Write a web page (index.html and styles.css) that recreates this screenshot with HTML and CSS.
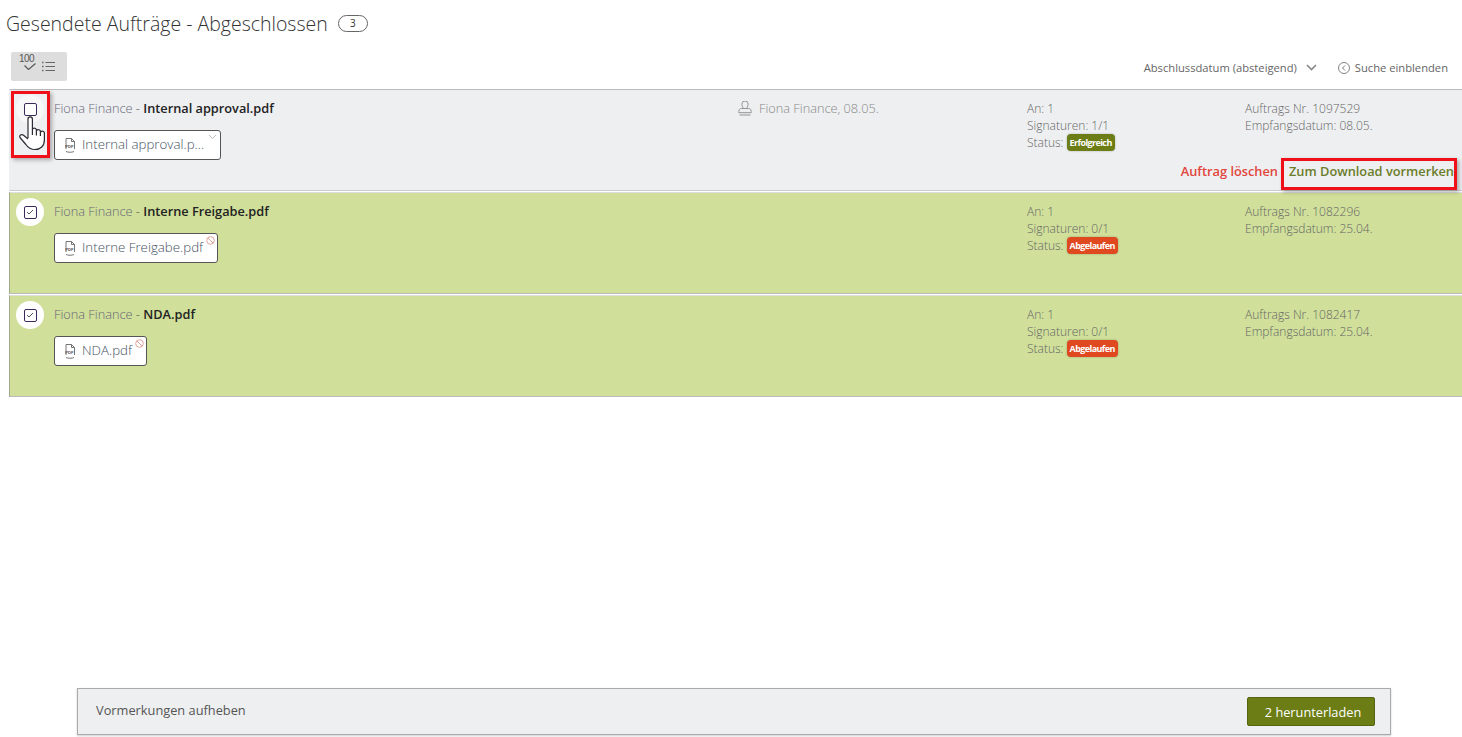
FILE: index.html
```html
<!DOCTYPE html>
<html lang="de">
<head>
    <meta charset="UTF-8">
    <title>Gesendete Aufträge - Abgeschlossen</title>
    <link rel="stylesheet" href="styles.css">
</head>
<body>
    <!-- Title -->
    <div class="page-title">
        <h1>Gesendete Aufträge - Abgeschlossen</h1>
        <span class="count-pill">3</span>
    </div>

    <!-- Toolbar -->
    <div class="toolbar">
        <button class="select-btn">
            <span class="select-100">100</span>
            <svg class="select-check" width="12" height="7" viewBox="0 0 12 7"><path d="M.5 2.500L4.500 6.500 11.500.5" fill="none" stroke="#555" stroke-width="1.100"/></svg>
            <svg class="select-list" width="13" height="11" viewBox="0 0 13 11"><path d="M3.500 1.500H13M3.500 5.500H13M3.500 9.500H13" stroke="#666" stroke-width="1"/><path d="M0 1.500h1.500M0 5.500h1.500M0 9.500h1.500" stroke="#666" stroke-width="1.400"/></svg>
        </button>
        <div class="toolbar-right">
            <span>Abschlussdatum (absteigend)</span>
            <svg class="sort-chevron" width="11" height="7" viewBox="0 0 11 7"><path d="M1 1l4.500 4.500L10 1" fill="none" stroke="#888" stroke-width="1.600"/></svg>
            <svg class="search-icon" width="12" height="12" viewBox="0 0 12 12"><circle cx="6" cy="6" r="5.500" fill="none" stroke="#666" stroke-width="0.800"/><path d="M7 3.500L4.500 6 7 8.500" fill="none" stroke="#666" stroke-width="0.900"/></svg>
            <span>Suche einblenden</span>
        </div>
    </div>

    <!-- Orders -->
    <div class="order-list">
        <div class="order order-open">
            <div class="order-main">
                <div class="check-cell">
                    <span class="check-circle"><span class="check-box"></span></span>
                </div>
                <div>
                    <div class="order-name"><span class="sender">Fiona Finance</span> - <b>Internal approval.pdf</b></div>
                    <div class="doc-chip doc-chip-long">
                        <svg class="pdf-icon" width="12" height="16" viewBox="0 0 12 16"><path d="M2 12V1.500h5.500L10.500 4.500V12M7.500 1.500v3h3M2 14.500c2 1 6 1 8 0" fill="none" stroke="#666" stroke-width="0.900"/><text x="1.200" y="11" class="pdf-label">PDF</text></svg>
                        <span class="doc-name">Internal approval.p...</span>
                        <svg class="chip-mark" width="9" height="6" viewBox="0 0 9 6"><path d="M1 1l3.500 3.500L8 1" fill="none" stroke="#aaa" stroke-width="0.800"/></svg>
                    </div>
                </div>
                <div class="stamp-cell">
                    <svg width="14" height="15" viewBox="0 0 14 15"><path d="M5 7.500c0-2-1.200-2.700-1.200-4.300a3.200 3.200 0 0 1 6.400 0c0 1.600-1.200 2.300-1.200 4.300M.8 10.500c0-1.800 1-3 2.700-3h7c1.700 0 2.700 1.200 2.700 3v1.200H.8zM1.500 14h11" fill="none" stroke="#8a8a8a" stroke-width="0.900"/></svg>
                    <span>Fiona Finance, 08.05.</span>
                </div>
                <div class="info-cell">
                    <div>An: 1</div>
                    <div>Signaturen: 1/1</div>
                    <div>Status: <span class="badge badge-ok">Erfolgreich</span></div>
                </div>
                <div class="info-cell">
                    <div>Auftrags Nr. 1097529</div>
                    <div>Empfangsdatum: 08.05.</div>
                </div>
            </div>
            <div class="order-actions">
                <a class="action-delete">Auftrag löschen</a>
                <a class="action-mark">Zum Download vormerken</a>
            </div>
        </div>

        <div class="order order-marked">
            <div class="order-main">
                <div class="check-cell">
                    <span class="check-circle"><span class="check-box"><svg width="8" height="6" viewBox="0 0 8 6"><path d="M1 3l2 2 4-4" fill="none" stroke="#555" stroke-width="1"/></svg></span></span>
                </div>
                <div>
                    <div class="order-name"><span class="sender">Fiona Finance</span> - <b>Interne Freigabe.pdf</b></div>
                    <div class="doc-chip">
                        <svg class="pdf-icon" width="12" height="16" viewBox="0 0 12 16"><path d="M2 12V1.500h5.500L10.500 4.500V12M7.500 1.500v3h3M2 14.500c2 1 6 1 8 0" fill="none" stroke="#666" stroke-width="0.900"/><text x="1.200" y="11" class="pdf-label">PDF</text></svg>
                        <span class="doc-name">Interne Freigabe.pdf</span>
                        <svg class="chip-mark chip-ban" width="9" height="9" viewBox="0 0 9 9"><circle cx="4.500" cy="4.500" r="3.800" fill="none" stroke="#e2a59a" stroke-width="1"/><path d="M2 2l5 5" stroke="#e2a59a" stroke-width="1"/></svg>
                    </div>
                </div>
                <div></div>
                <div class="info-cell">
                    <div>An: 1</div>
                    <div>Signaturen: 0/1</div>
                    <div>Status: <span class="badge badge-expired">Abgelaufen</span></div>
                </div>
                <div class="info-cell">
                    <div>Auftrags Nr. 1082296</div>
                    <div>Empfangsdatum: 25.04.</div>
                </div>
            </div>
        </div>

        <div class="order order-marked">
            <div class="order-main">
                <div class="check-cell">
                    <span class="check-circle"><span class="check-box"><svg width="8" height="6" viewBox="0 0 8 6"><path d="M1 3l2 2 4-4" fill="none" stroke="#555" stroke-width="1"/></svg></span></span>
                </div>
                <div>
                    <div class="order-name"><span class="sender">Fiona Finance</span> - <b>NDA.pdf</b></div>
                    <div class="doc-chip">
                        <svg class="pdf-icon" width="12" height="16" viewBox="0 0 12 16"><path d="M2 12V1.500h5.500L10.500 4.500V12M7.500 1.500v3h3M2 14.500c2 1 6 1 8 0" fill="none" stroke="#666" stroke-width="0.900"/><text x="1.200" y="11" class="pdf-label">PDF</text></svg>
                        <span class="doc-name">NDA.pdf</span>
                        <svg class="chip-mark chip-ban" width="9" height="9" viewBox="0 0 9 9"><circle cx="4.500" cy="4.500" r="3.800" fill="none" stroke="#e2a59a" stroke-width="1"/><path d="M2 2l5 5" stroke="#e2a59a" stroke-width="1"/></svg>
                    </div>
                </div>
                <div></div>
                <div class="info-cell">
                    <div>An: 1</div>
                    <div>Signaturen: 0/1</div>
                    <div>Status: <span class="badge badge-expired">Abgelaufen</span></div>
                </div>
                <div class="info-cell">
                    <div>Auftrags Nr. 1082417</div>
                    <div>Empfangsdatum: 25.04.</div>
                </div>
            </div>
        </div>
    </div>

    <!-- Bottom bar -->
    <div class="download-bar">
        <span class="bar-clear">Vormerkungen aufheben</span>
        <button class="bar-download">2 herunterladen</button>
    </div>

    <!-- Tutorial highlights drawn over the page -->
    <div class="highlight highlight-check"></div>
    <div class="highlight highlight-mark"></div>
    <svg class="hand-cursor" width="30" height="36" viewBox="0 0 30 36"><path d="M10 23V4a2.200 2.200 0 0 1 4.400 0v11a2 2 0 0 1 4 .5v1a2 2 0 0 1 4 .5v1a2 2 0 0 1 4 .5V25c0 6-4 9.500-9.500 9.500-4.500 0-7-2-9-5L2 22.500c-1.300-2 1.500-3.800 3.500-2.300L10 24M14.400 15v5M18.400 16.500v4M22.400 18v3" fill="#fff" stroke="#2b2b33" stroke-width="1.200" stroke-linejoin="round"/></svg>
</body>
</html>
```

FILE: styles.css
```css
/* General styles */
* {
    box-sizing: border-box;
}

body {
    margin: 0;
    height: 737px;
    display: flex;
    flex-direction: column;
    overflow: hidden;
    background: #fff;
    color: #555;
    font-family: "Open Sans", sans-serif;
    font-size: 12px;
    font-weight: 300;
    position: relative;
}

/* Title */
.page-title {
    display: flex;
    align-items: center;
    height: 47px;
    padding: 0 0 0 6px;
}

.page-title h1 {
    margin: 0;
    font-size: 19.500px;
    font-weight: 300;
    color: #333;
}

.count-pill {
    width: 30px;
    height: 17px;
    margin-left: 10px;
    border: 1px solid #666;
    border-radius: 9px;
    color: #333;
    font-size: 10px;
    font-weight: 400;
    line-height: 14px;
    text-align: center;
}

/* Toolbar */
.toolbar {
    display: flex;
    justify-content: space-between;
    align-items: flex-start;
    height: 42px;
    padding: 5px 14px 0 11px;
}

.select-btn {
    position: relative;
    width: 56px;
    height: 29px;
    padding: 0;
    border: none;
    border-radius: 2px;
    background: #ddd;
}

.select-100 {
    position: absolute;
    top: 1px;
    left: 8px;
    color: #555;
    font-family: "Liberation Sans", sans-serif;
    font-size: 10px;
    letter-spacing: -0.6px;
}

.select-check {
    position: absolute;
    top: 11px;
    left: 13px;
}

.select-list {
    position: absolute;
    top: 9px;
    left: 31px;
}

.toolbar-right {
    display: flex;
    align-items: center;
    height: 31px;
    font-size: 11.200px;
    font-weight: 400;
    color: #666;
}

.sort-chevron {
    margin: 0 21px 0 9px;
}

.search-icon {
    margin-right: 5px;
}

/* Orders */
.order-list {
    padding-left: 9px;
}

.order {
    display: flex;
    flex-direction: column;
    height: 102px;
    margin-bottom: 1px;
    border-left: 1px solid transparent;
    border-top: 1px solid #bbb;
    border-bottom: 1px solid #ccc;
}

.order-open {
    background: #eeeff1;
}

.order-marked {
    border-left-color: #a0a88a;
    border-top-color: #ddd;
    border-bottom-color: #bbb;
    background: #d0df9a;
}

.order-main {
    display: grid;
    grid-template-columns: 44px 684px 289px 218px 1fr;
    padding-top: 10px;
    line-height: 17px;
}

.check-cell {
    padding-left: 6px;
}

.check-circle {
    display: flex;
    align-items: center;
    justify-content: center;
    width: 28px;
    height: 28px;
    margin-top: -5px;
    border-radius: 50%;
    background: #fff;
}

.check-box {
    display: flex;
    align-items: center;
    justify-content: center;
    width: 13px;
    height: 13px;
    border: 1px solid #3a2a5a;
    border-radius: 2px;
    background: #fff;
}

.order-open .check-circle {
    background: #f7f7f8;
}

.order-name {
    color: #555;
    font-size: 12.750px;
}

.order-name b {
    font-weight: 600;
    color: #222;
}

.sender {
    color: #667;
}

/* Document chip */
.doc-chip {
    position: relative;
    display: inline-flex;
    align-items: center;
    height: 30px;
    margin-top: 13px;
    padding: 0 14px 2px 9px;
    border: 1px solid #555;
    border-radius: 3px;
    background: #fff;
}

.doc-chip-long {
    width: 167px;
}

.pdf-icon {
    margin-top: 2px;
    margin-right: 6px;
}

.pdf-label {
    font-family: "Liberation Sans", sans-serif;
    font-size: 4.200px;
    font-weight: 700;
    fill: #555;
}

.doc-name {
    color: #46525f;
    font-size: 13.300px;
    white-space: nowrap;
}

.chip-mark {
    position: absolute;
    top: 3px;
    right: 3px;
}

.chip-ban {
    top: 2px;
    right: 2px;
}

.stamp-cell {
    display: flex;
    align-items: flex-start;
    gap: 7px;
    color: #888;
    font-size: 12.750px;
}

.stamp-cell svg {
    margin-top: 1px;
}

.info-cell {
    color: #666;
    font-size: 12px;
}

/* Status badges */
.badge {
    display: inline-block;
    height: 17px;
    padding: 0 3px;
    border-radius: 4px;
    color: #fff;
    font-size: 9px;
    font-weight: 700;
    letter-spacing: -0.6px;
    line-height: 17px;
    vertical-align: 1px;
    box-shadow: 0 0 2px rgba(0, 0, 0, 0.3);
}

.badge-ok {
    background: #6b7d14;
}

.badge-expired {
    background: #e0491f;
}

/* Order actions */
.order-actions {
    display: flex;
    justify-content: flex-end;
    gap: 11px;
    margin-top: auto;
    padding: 0 8px 10px 0;
    font-size: 12.800px;
    font-weight: 600;
}

.action-delete {
    color: #e2453c;
}

.action-mark {
    color: #6b7d2a;
}

/* Bottom bar */
.download-bar {
    display: flex;
    justify-content: space-between;
    align-items: center;
    height: 47px;
    margin: auto 71px 2px 77px;
    padding: 0 15px 0 18px;
    border: 1px solid #aaa;
    background: #eeeff1;
    box-shadow: 0 1px 2px rgba(0, 0, 0, 0.2);
}

.bar-clear {
    padding-bottom: 4px;
    color: #555;
    font-size: 12.800px;
    font-weight: 400;
}

.bar-download {
    width: 128px;
    height: 29px;
    padding: 0 0 0 4px;
    border: 1px solid #556410;
    border-radius: 2px;
    background: #6b7d14;
    color: #fff;
    font-family: "Open Sans", sans-serif;
    font-size: 12.750px;
}

/* Highlights */
.highlight {
    position: absolute;
    border: 3px solid #f0101a;
    box-shadow: 2px 2px 4px rgba(0, 0, 0, 0.3);
}

.highlight-check {
    top: 91px;
    left: 11px;
    width: 39px;
    height: 67px;
}

.highlight-mark {
    top: 158px;
    left: 1281px;
    width: 176px;
    height: 32px;
}

.hand-cursor {
    position: absolute;
    top: 115px;
    left: 18px;
}
```
